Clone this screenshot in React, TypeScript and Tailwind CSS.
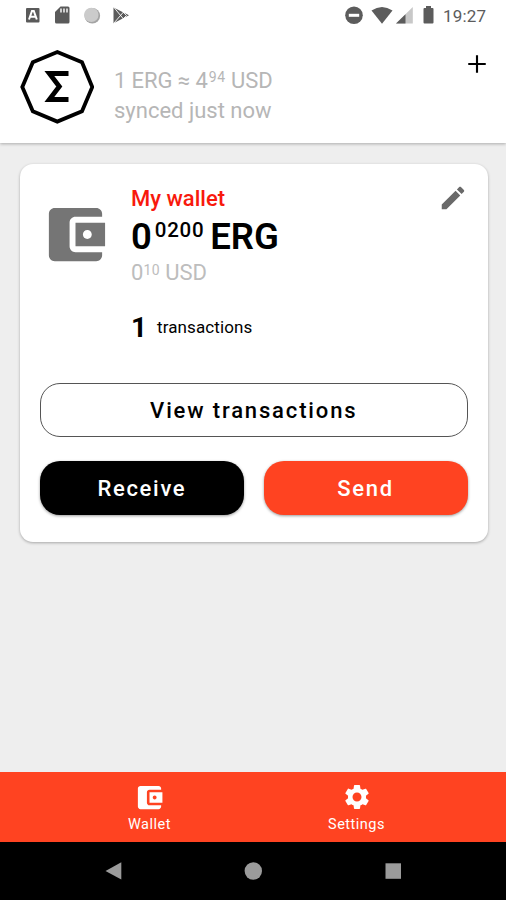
import React from 'react';

const WALLET =
  'M21 18v1c0 1.1-.9 2-2 2H5c-1.11 0-2-.9-2-2V5c0-1.1.89-2 2-2h14c1.1 0 2 .9 2 2v1h-9c-1.11 0-2 .9-2 2v8c0 1.1.89 2 2 2h9zm-9-2h10V8H12v8zm4-2.5c-.83 0-1.5-.67-1.5-1.5s.67-1.5 1.5-1.5 1.5.67 1.5 1.5-.67 1.5-1.5 1.5z';
const PENCIL =
  'M3 17.25V21h3.75L17.81 9.94l-3.75-3.75L3 17.25zM20.71 7.04c.39-.39.39-1.02 0-1.41l-2.34-2.34c-.39-.39-1.02-.39-1.41 0l-1.83 1.83 3.75 3.75 1.83-1.83z';
const GEAR =
  'M19.14 12.94c.04-.3.06-.61.06-.94 0-.32-.02-.64-.07-.94l2.03-1.58c.18-.14.23-.41.12-.61l-1.92-3.32c-.12-.22-.37-.29-.59-.22l-2.39.96c-.5-.38-1.03-.7-1.62-.94l-.36-2.54c-.04-.24-.24-.41-.48-.41h-3.84c-.24 0-.43.17-.47.41l-.36 2.54c-.59.24-1.13.57-1.62.94l-2.39-.96c-.22-.08-.47 0-.59.22L2.74 8.87c-.12.21-.08.47.12.61l2.03 1.58c-.05.3-.09.63-.09.94s.02.64.07.94l-2.03 1.58c-.18.14-.23.41-.12.61l1.92 3.32c.12.22.37.29.59.22l2.39-.96c.5.38 1.03.7 1.62.94l.36 2.54c.05.24.24.41.48.41h3.84c.24 0 .44-.17.47-.41l.36-2.54c.59-.24 1.13-.56 1.62-.94l2.39.96c.22.08.47 0 .59-.22l1.92-3.32c.12-.22.07-.47-.12-.61l-2.01-1.58zM12 15.6c-1.98 0-3.6-1.62-3.6-3.6s1.62-3.6 3.6-3.6 3.6 1.62 3.6 3.6-1.62 3.6-3.6 3.6z';

function Icon({ d, className }: { d: string; className: string }) {
  return (
    <svg viewBox="0 0 24 24" fill="currentColor" className={className}>
      <path d={d} />
    </svg>
  );
}

function StatusBar() {
  return (
    <div className="flex h-8 items-center justify-between pr-[18px] pl-[26px] text-[#5c5c5c]">
      <svg width="106" height="32" viewBox="26 0 106 32">
        <rect x="26" y="8" width="13.5" height="14.5" rx="1" fill="#5a5a5a" />
        <path d="M29 19.5 32 11h1.8l3 8.5M30.5 16.8h4.6" fill="none" stroke="#fff" strokeWidth="2" />
        <path d="M60.500 6.500h7.500q1.500 0 1.500 1.500V22q0 1.500-1.500 1.500H56.500q-1.500 0-1.500-1.500V12z" fill="#5a5a5a" />
        <path d="M61 8.500v4M64 8.500v4M67 8.500v4" stroke="#fff" strokeWidth="1.400" />
        <circle cx="92.300" cy="15.800" r="7.800" fill="#a4a4a4" />
        <circle cx="91.300" cy="14.900" r="7.200" fill="#cbcbcb" />
        <path d="M113.500 7.500 129 15.300 113.500 23.200z" fill="#5a5a5a" />
        <path d="M114 7.500 123.500 19M114 23 123.500 12M123 12l3.500 3.500-3.500 3.500" fill="none" stroke="#fff" strokeWidth="0.900" />
      </svg>
      <div className="flex items-center">
        <svg width="94" height="32" viewBox="344 0 94 32">
          <circle cx="354" cy="15.300" r="8.800" fill="#5c5c5c" />
          <rect x="348.800" y="13.800" width="10.400" height="3" fill="#fff" />
          <path d="M371.500 10.500Q382 3.300 392.500 10.500L382 23.700z" fill="#5c5c5c" />
          <path d="M412.800 7v16.500H396z" fill="#c8c8c8" />
          <path d="M405.500 14.200v9.300H396z" fill="#5c5c5c" />
          <path d="M426 6h5v2h1.500q1 0 1 1v13.500q0 1-1 1h-8q-1 0-1-1V9q0-1 1-1H426z" fill="#5c5c5c" />
        </svg>
        <span className="ml-[5px] w-[45px] text-[17px] leading-8 tracking-[0.2px] whitespace-nowrap">19:27</span>
      </div>
    </div>
  );
}

function ErgoLogo() {
  return (
    <svg width="74" height="76" viewBox="20 49 74 76" fill="none" stroke="#000">
      <path d="M57.300 52 82 62.200 92.300 87 82 111.200 57.300 121.600 32.800 111.200 22.300 87 32.800 62.200z" strokeWidth="3.800" />
      <path d="M68.500 73.500H49.300L59.300 86.500 49.300 99.500H68.500" strokeWidth="4.800" />
    </svg>
  );
}

export default function App() {
  return (
    <div className="flex h-[900px] w-[506px] flex-col overflow-hidden bg-[#eeeeee] font-['Roboto',sans-serif]">
      <header className="h-[143px] shrink-0 bg-white shadow-[0_1px_3px_rgba(0,0,0,0.28)]">
        <StatusBar />
        <div className="flex pt-[17px] pl-5">
          <ErgoLogo />
          <div className="ml-5 flex-1 pt-[17px] text-[22px] leading-[30px] whitespace-nowrap text-[#b6b6b6]">
            <div className="flex tracking-[-0.1px]">
              <span>1 ERG ≈ 4</span>
              <span className="ml-px text-[14px] leading-[23px] tracking-[0.8px]">94</span>
              <span className="ml-[5px]">USD</span>
            </div>
            <div>synced just now</div>
          </div>
          <Icon d="M19 12.850h-6.150V19h-1.700v-6.150H5v-1.700h6.150V5h1.700v6.150H19z" className="mr-[14px] size-[30px]" />
        </div>
      </header>

      <main className="flex-1 pt-[21px] pr-[18px] pl-5">
        <section className="flex h-[378px] flex-col rounded-[13px] bg-white pr-[20.5px] pl-5 shadow-[0_1px_3px_rgba(0,0,0,0.3)]">
          <div className="flex pt-[19px]">
            <Icon d={WALLET} className="mt-4 size-[71px] text-[#757575]" />
            <div className="ml-5 flex-1 whitespace-nowrap">
              <h1 className="text-[22px] leading-8 font-medium text-[#f8190d]">My wallet</h1>
              <div className="flex h-11 text-[36.500px] leading-[43px] font-semibold text-black">
                <span>0</span>
                <span className="ml-[3px] text-[20.500px] leading-[31px] font-medium tracking-[0.700px]">0200</span>
                <span className="ml-[6px]">ERG</span>
              </div>
              <div className="flex h-7 text-[22px] leading-7 text-[#bdbdbd]">
                <span>0</span>
                <span className="text-[14px] leading-[22px] tracking-[0.5px]">10</span>
                <span className="ml-[5px]">USD</span>
              </div>
              <div className="flex h-[59px] items-start pt-[23px] text-black">
                <span className="w-[26px] text-[28px] leading-9 font-bold">1</span>
                <span className="text-[17px] leading-[34px] tracking-[0.1px]">transactions</span>
              </div>
            </div>
            <Icon d={PENCIL} className="size-[30px] text-[#696969]" />
          </div>
          <button className="mt-[37px] h-[54px] rounded-[20px] border border-[#555] text-[22px] font-medium tracking-[1.850px] text-black">
            View transactions
          </button>
          <div className="mt-6 grid grid-cols-2 gap-5 text-[22px] font-medium tracking-[1.700px] text-white">
            <button className="h-[54px] rounded-[20px] bg-black shadow-[0_1px_3px_rgba(0,0,0,0.4)]">Receive</button>
            <button className="h-[54px] rounded-[20px] bg-[#ff4321] shadow-[0_1px_3px_rgba(0,0,0,0.4)]">Send</button>
          </div>
        </section>
      </main>

      <nav className="flex h-[70px] shrink-0 justify-center bg-[#ff4321] text-[14.500px] leading-4 tracking-[0.500px] text-white">
        <div className="flex w-[207px] flex-col items-center pt-[10px]">
          <Icon d={WALLET} className="size-[31px]" />
          <span className="mt-1">Wallet</span>
        </div>
        <div className="flex w-[207px] flex-col items-center pt-[10px]">
          <Icon d={GEAR} className="size-[30px]" />
          <span className="mt-[5px]">Settings</span>
        </div>
      </nav>
      <div className="flex h-[58px] shrink-0 items-center justify-center bg-black">
        <svg width="298" height="20" viewBox="104 861 298 20" fill="#9b9b9b">
          <path d="M105.500 871 121.300 862.200V879.500z" />
          <circle cx="253.300" cy="871" r="8.700" />
          <rect x="385.500" y="863.300" width="15.500" height="15.500" />
        </svg>
      </div>
    </div>
  );
}
